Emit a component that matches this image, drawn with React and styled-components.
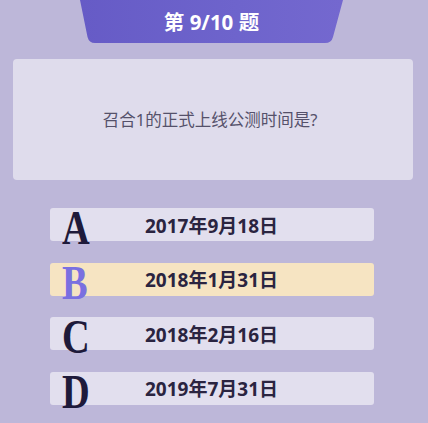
import React from 'react';
import styled, { createGlobalStyle } from 'styled-components';

const Global = createGlobalStyle`
  html, body {
    margin: 0;
    padding: 0;
    background: #bdb7d9;
  }
  body {
    font-family: "Noto Sans", "Noto Sans CJK SC", sans-serif;
  }
`;

const Page = styled.div`
  width: 428px;
  height: 423px;
  background: #bdb7d9;
  display: flex;
  flex-direction: column;
  align-items: center;
  overflow: hidden;
`;

const Header = styled.div`
  width: 263px;
  height: 43px;
  margin-left: -5px;
  background: linear-gradient(90deg, #665bc6 0%, #6e64cc 60%, #7468cf 100%);
  clip-path: path('M0,0 L263,0 L253,37 Q251.5,43 245,43 L15,43 Q9,43 7.5,37 Z');
  display: flex;
  align-items: center;
  justify-content: center;
  color: #ffffff;
  font-size: 20.5px;
  font-weight: 700;
  padding-bottom: 1px;
  box-sizing: border-box;
`;

const QuestionCard = styled.div`
  width: 400px;
  height: 121px;
  margin-top: 16px;
  margin-left: -3px;
  background: #dfdcec;
  border-radius: 4px;
  display: flex;
  align-items: center;
  justify-content: center;
  color: #55516a;
  font-size: 16.5px;
  padding-right: 5px;
  padding-bottom: 2px;
  box-sizing: border-box;
`;

const Options = styled.div`
  display: flex;
  flex-direction: column;
  gap: 21.5px;
  margin-top: 28px;
  margin-left: -5px;
`;

const Option = styled.div`
  position: relative;
  width: 324px;
  height: 33px;
  border-radius: 3px;
  background: ${(p) => (p.$selected ? '#f6e4c2' : '#e2dfee')};
  display: flex;
  align-items: center;
  justify-content: center;
  color: #2a2440;
  font-size: 19px;
  font-weight: 700;
`;

const Letter = styled.span`
  position: absolute;
  left: 12px;
  top: -4px;
  font-family: "Liberation Serif", "DejaVu Serif", serif;
  font-weight: 700;
  font-size: 48px;
  line-height: 1;
  color: ${(p) => (p.$selected ? '#7a70e0' : '#1e1a3a')};
  transform: scaleX(0.8);
  transform-origin: left center;
`;

const options = [
  { key: 'A', text: '2017年9月18日' },
  { key: 'B', text: '2018年1月31日', selected: true },
  { key: 'C', text: '2018年2月16日' },
  { key: 'D', text: '2019年7月31日' },
];

export default function App() {
  return (
    <>
      <Global />
      <Page>
        <Header>第 9/10 题</Header>
        <QuestionCard>召合1的正式上线公测时间是?</QuestionCard>
        <Options>
          {options.map((o) => (
            <Option key={o.key} $selected={o.selected}>
              <Letter $selected={o.selected}>{o.key}</Letter>
              {o.text}
            </Option>
          ))}
        </Options>
      </Page>
    </>
  );
}
